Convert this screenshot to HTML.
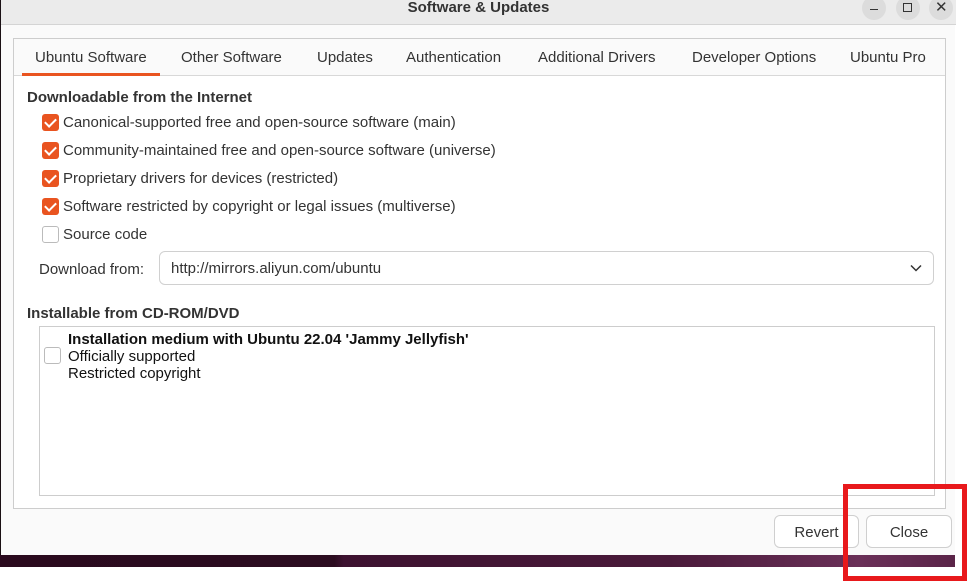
<!DOCTYPE html>
<html><head><meta charset="utf-8"><style>
*{margin:0;padding:0;box-sizing:border-box}
body{width:969px;height:583px;background:#fff;position:relative;overflow:hidden;font-family:"Liberation Sans","DejaVu Sans",sans-serif;font-size:15px;color:#333}
.a{position:absolute;white-space:nowrap}
.win{position:absolute;left:0;top:0;width:955px;height:555px;background:#fafafa;border-left:1px solid #1a1014}
.title{position:absolute;left:0;top:0;width:955px;height:25px;background:#ebebeb;border-bottom:1px solid #d4d4d4}
.wall{position:absolute;left:0;top:555px;width:955px;height:12px;background:linear-gradient(90deg,#2a0a1e 0%,#2c0c20 35%,#3d1230 36%,#4a1a3a 70%,#6a3058 90%,#5a2448 100%)}
.frame{position:absolute;left:12px;top:38px;width:933px;height:471px;border:1px solid #cdcdcd;background:#fff}
.tabs{position:absolute;left:0;top:0;width:931px;height:37px;border-bottom:1px solid #d8d8d8;background:#fafafa}
.cb{position:absolute;width:17px;height:17px;border-radius:3px}
.on{background:#e95420}
.off{border:1px solid #bbb;background:#fff}
.on:after{content:"";position:absolute;left:5px;top:2px;width:5px;height:9px;border:solid #fff;border-width:0 2px 2px 0;transform:rotate(45deg)}
.btn{position:absolute;height:33px;border:1px solid #cfcfcf;border-radius:6px;background:#fff;text-align:center;line-height:33px;color:#333}
.circ{position:absolute;top:-4px;width:24px;height:24px;border-radius:12px;background:#dcdcdc}
</style></head><body>
<div class="win">
<div class="title"><div class="a" style="left:0;width:955px;text-align:center;top:-1px;font-weight:bold;color:#333">Software &amp; Updates</div>
<div class="circ" style="left:861px"><div class="a" style="left:8px;top:13px;width:8px;height:1px;background:#333"></div></div>
<div class="circ" style="left:895px"><div class="a" style="left:7px;top:7px;width:9px;height:9px;border:1px solid #333"></div></div>
<div class="circ" style="left:928px"><div class="a" style="left:6px;top:2px;font-size:15px;color:#333">✕</div></div>
</div>
<div class="frame">
<div class="tabs">
<div class="a" style="left:21px;top:10px">Ubuntu Software</div>
<div class="a" style="left:8px;top:34px;width:138px;height:3px;background:#e95420"></div>
<div class="a" style="left:167px;top:10px">Other Software</div>
<div class="a" style="left:303px;top:10px">Updates</div>
<div class="a" style="left:392px;top:10px">Authentication</div>
<div class="a" style="left:524px;top:10px">Additional Drivers</div>
<div class="a" style="left:678px;top:10px">Developer Options</div>
<div class="a" style="left:836px;top:10px">Ubuntu Pro</div>
</div>
<div class="a" style="left:13px;top:50px;font-weight:bold">Downloadable from the Internet</div>
<div class="cb on" style="left:28px;top:75px"></div><div class="a" style="left:49px;top:75px">Canonical-supported free and open-source software (main)</div>
<div class="cb on" style="left:28px;top:103px"></div><div class="a" style="left:49px;top:103px">Community-maintained free and open-source software (universe)</div>
<div class="cb on" style="left:28px;top:131px"></div><div class="a" style="left:49px;top:131px">Proprietary drivers for devices (restricted)</div>
<div class="cb on" style="left:28px;top:159px"></div><div class="a" style="left:49px;top:159px">Software restricted by copyright or legal issues (multiverse)</div>
<div class="cb off" style="left:28px;top:187px"></div><div class="a" style="left:49px;top:187px">Source code</div>
<div class="a" style="left:25px;top:222px">Download from:</div>
<div class="a" style="left:145px;top:212px;width:775px;height:34px;border:1px solid #d0d0d0;border-radius:6px;background:#fff"><div class="a" style="left:11px;top:8px">http://mirrors.aliyun.com/ubuntu</div>
<svg class="a" style="left:750px;top:12px" width="12" height="8"><path d="M1 1.5l5 5 5-5" fill="none" stroke="#333" stroke-width="1.5"/></svg></div>
<div class="a" style="left:13px;top:266px;font-weight:bold">Installable from CD-ROM/DVD</div>
<div class="a" style="left:25px;top:287px;width:896px;height:170px;border:1px solid #cdcdcd;background:#fff">
<div class="cb off" style="left:4px;top:20px"></div>
<div class="a" style="left:28px;top:4px;font-weight:bold;color:#111">Installation medium with Ubuntu 22.04 'Jammy Jellyfish'</div>
<div class="a" style="left:28px;top:21px;color:#111">Officially supported</div>
<div class="a" style="left:28px;top:38px;color:#111">Restricted copyright</div>
</div>
</div>
<div class="btn" style="left:773px;top:515px;width:85px">Revert</div>
<div class="btn" style="left:865px;top:515px;width:86px">Close</div>
</div>
<div class="wall"></div>
<div class="a" style="left:843px;top:484px;width:124px;height:97px;border:5px solid #e8191c"></div>
</body></html>
